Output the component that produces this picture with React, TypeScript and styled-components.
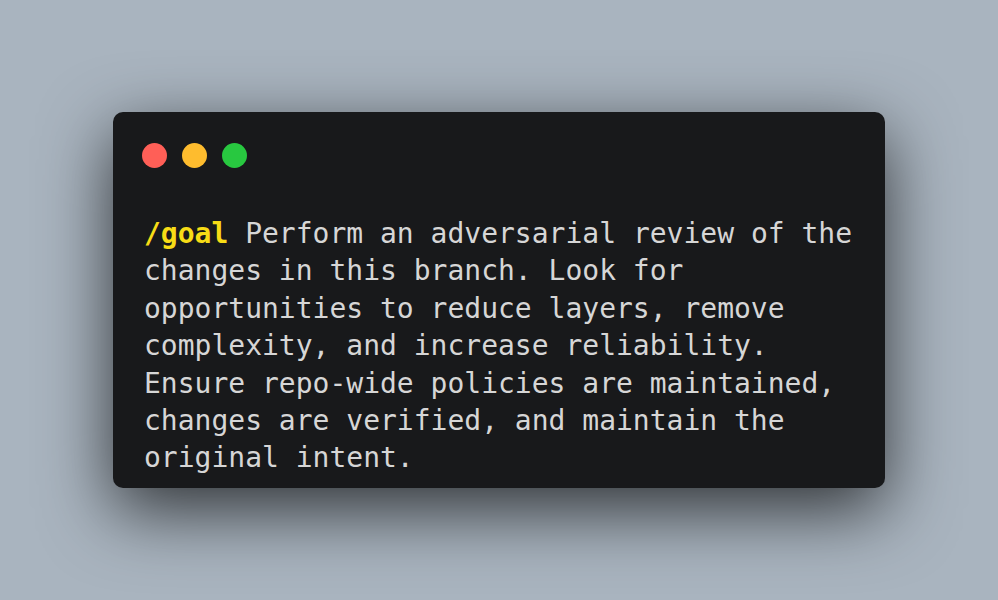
import React from "react";
import styled, { createGlobalStyle } from "styled-components";

const Global = createGlobalStyle`
  html, body { margin: 0; padding: 0; }
  body { background: #a9b4bf; }
`;

const Page = styled.div`
  width: 998px;
  height: 600px;
  display: flex;
  align-items: center;
  justify-content: center;
  background: #a9b4bf;
`;

const Card = styled.div`
  width: 772px;
  height: 376px;
  box-sizing: border-box;
  background: #18191b;
  border-radius: 10px;
  padding: 31px 20px 0 29px;
  box-shadow: 0 22px 70px rgba(0, 0, 0, 0.72);
  display: flex;
  flex-direction: column;
`;

const Dots = styled.div`
  display: flex;
  gap: 15px;
`;

const Dot = styled.span<{ $c: string }>`
  width: 25px;
  height: 25px;
  border-radius: 50%;
  background: ${(p) => p.$c};
`;

const Text = styled.p`
  margin: 47px 0 0 2px;
  font-family: "DejaVu Sans Mono", monospace;
  font-size: 28px;
  line-height: 37.4px;
  color: #d6d6d6;
`;

const Cmd = styled.span`
  color: #f7dc16;
  font-weight: bold;
`;

export default function App() {
  return (
    <Page>
      <Global />
      <Card>
        <Dots>
          <Dot $c="#ff5f57" />
          <Dot $c="#febc2e" />
          <Dot $c="#28c840" />
        </Dots>
        <Text>
          <Cmd>/goal</Cmd> Perform an adversarial review of the changes in this
          branch. Look for opportunities to reduce layers, remove complexity, and
          increase reliability. Ensure repo-wide policies are maintained, changes
          are verified, and maintain the original intent.
        </Text>
      </Card>
    </Page>
  );
}
